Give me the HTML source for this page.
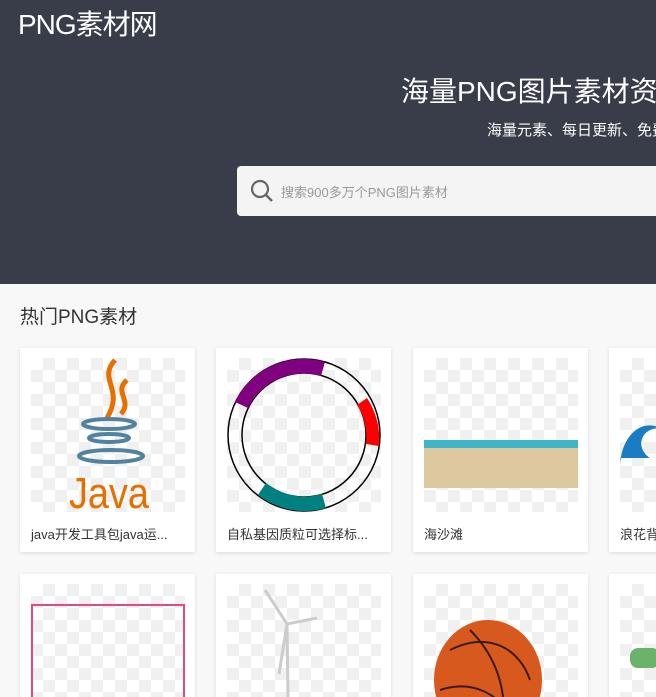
<!DOCTYPE html>
<html><head><meta charset="utf-8"><style>
*{margin:0;padding:0;box-sizing:border-box}
html,body{width:656px;height:697px;overflow:hidden}
body{background:#f8f8f8;font-family:"Liberation Sans","Noto Sans CJK SC",sans-serif;position:relative}
.hd{position:absolute;left:0;top:0;width:656px;height:284px;background:#393c49}
.logo{position:absolute;left:18px;top:3px;color:#fff;font-size:28px;letter-spacing:-1px;white-space:nowrap}
.t1{position:absolute;left:401px;top:70px;color:#fff;font-size:28px;white-space:nowrap}
.t2{position:absolute;left:487px;top:119px;color:#fff;font-size:15px;white-space:nowrap}
.sb{position:absolute;left:237px;top:166px;width:419px;height:50px;background:#f4f4f4;border-radius:4px 0 0 4px}
.sb span{position:absolute;left:44px;top:16px;font-size:13px;color:#999;white-space:nowrap}
.sec{position:absolute;left:20px;top:302px;font-size:19px;color:#333;white-space:nowrap}
.card{position:absolute;width:175px;height:204px;background:#fff;box-shadow:0 1px 4px rgba(0,0,0,.12);overflow:hidden}
.img{position:absolute;left:11px;top:10px;width:154px;height:154px;background-color:#fff;background-image:conic-gradient(#f0f0f0 25%,#fff 0 50%,#f0f0f0 0 75%,#fff 0);background-size:24px 24px;overflow:hidden}
.cap{position:absolute;left:11px;top:176px;font-size:13px;color:#333;white-space:nowrap}
</style></head><body>
<div class="hd">
<div class="logo">PNG素材网</div>
<div class="t1">海量PNG图片素材资源</div>
<div class="t2">海量元素、每日更新、免费下载</div>
<div class="sb"><svg style="position:absolute;left:13px;top:13px" width="24" height="24" viewBox="0 0 24 24"><circle cx="10" cy="10" r="8" fill="none" stroke="#666" stroke-width="2.2"/><path d="M16 16l6 6" stroke="#666" stroke-width="2.4"/></svg><span>搜索900多万个PNG图片素材</span></div>
</div>
<div class="sec">热门PNG素材</div>

<div class="card" style="left:20px;top:348px"><div class="img">
<svg width="154" height="154" viewBox="0 0 154 154"><path d="M84 2c-18 20 10 28-8 58M96 22c-14 12 6 20-6 34" stroke="#e76f00" stroke-width="5" fill="none"/><ellipse cx="78" cy="66" rx="26" ry="5" fill="none" stroke="#5382a1" stroke-width="4"/><ellipse cx="78" cy="80" rx="20" ry="4" fill="none" stroke="#5382a1" stroke-width="4"/><ellipse cx="80" cy="98" rx="32" ry="6" fill="none" stroke="#5382a1" stroke-width="4"/><text x="38" y="150" font-size="44" fill="#e76f00" font-family="Liberation Sans Narrow, Liberation Sans" textLength="80" lengthAdjust="spacingAndGlyphs">Java</text></svg>
</div><div class="cap">java开发工具包java运...</div></div>

<div class="card" style="left:216px;top:348px"><div class="img">
<svg width="154" height="154" viewBox="0 0 154 154"><circle cx="77" cy="77" r="76" fill="none" stroke="#000" stroke-width="1.5"/><circle cx="77" cy="77" r="62" fill="none" stroke="#000" stroke-width="1.5"/><path d="M8 44A76 76 0 0 1 98 4L94 18A62 62 0 0 0 21 50Z" fill="#800080"/><path d="M31 137A76 76 0 0 0 99 150L95 136A62 62 0 0 1 39 125Z" fill="#008080"/><path d="M140 40A76 76 0 0 1 152 88L139 86A62 62 0 0 0 130 47Z" fill="#f00"/></svg>
</div><div class="cap">自私基因质粒可选择标...</div></div>

<div class="card" style="left:413px;top:348px"><div class="img">
<svg width="154" height="154" viewBox="0 0 154 154"><rect x="0" y="82" width="154" height="8" fill="#3fb5c8"/><rect x="0" y="90" width="154" height="40" fill="#dcc9a0"/></svg>
</div><div class="cap">海沙滩</div></div>

<div class="card" style="left:609px;top:348px"><div class="img">
<svg width="154" height="154"><path d="M0 110c0-30 20-50 40-40-20 0-25 20-10 30H0Z" fill="#1a7dc4"/></svg>
</div><div class="cap">浪花背景</div></div>

<div class="card" style="left:20px;top:574px"><div class="img"><div style="position:absolute;left:0;top:20px;width:154px;height:140px;border:2px solid #e44a7a"></div></div></div>
<div class="card" style="left:216px;top:574px"><div class="img">
<svg width="154" height="154"><path d="M38 6L60 40 90 34M60 40 52 90M60 40l2 150" stroke="#ccc" stroke-width="3" fill="none"/></svg></div></div>
<div class="card" style="left:413px;top:574px"><div class="img">
<svg width="154" height="154"><ellipse cx="64" cy="96" rx="54" ry="60" fill="#d8591e"/><path d="M26 66C66 46 96 66 106 96M46 46c30 30 40 70 30 110M16 106c30-10 60 0 80 40" stroke="#3a1a08" stroke-width="2" fill="none"/></svg></div></div>
<div class="card" style="left:609px;top:574px"><div class="img"><div style="position:absolute;left:10px;top:64px;width:30px;height:20px;background:#6bb36b;border-radius:8px"></div></div></div>
</body></html>
